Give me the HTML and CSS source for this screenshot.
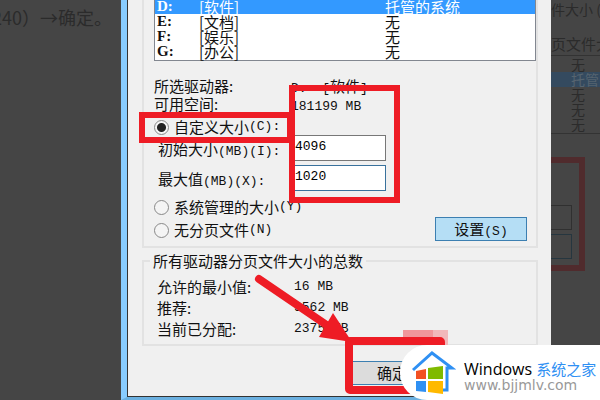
FILE: index.html
```
<!DOCTYPE html>
<html lang="zh-CN">
<head>
  <meta charset="UTF-8" />
  <meta name="viewport" content="width=device-width, initial-scale=1" />
  <title>虚拟内存</title>
  <link rel="stylesheet" href="styles.css">
</head>
<body>

  <div class="page">
    <div class="backdrop left"><p>240）→确定。</p></div>

    <form class="dialog">
      <div class="group drives">
        <table class="list">
          <tr class="selected"><td>D:</td><td>[软件]</td><td>托管的系统</td></tr>
          <tr><td>E:</td><td>[文档]</td><td>无</td></tr>
          <tr><td>F:</td><td>[娱乐]</td><td>无</td></tr>
          <tr><td>G:</td><td>[办公]</td><td>无</td></tr>
        </table>

        <div class="info">
          <span>所选驱动器:</span><span><b>D: &nbsp;[</b>软件<b>]</b></span>
          <span>可用空间:</span><span><b>181199 MB</b></span>
        </div>

        <label class="radio"><input type="radio" name="size" checked>自定义大小<b>(C):</b></label>
        <div class="field">
          <label for="initial">初始大小<b>(MB)(I):</b></label>
          <input type="text" id="initial" value="4096">
        </div>
        <div class="field">
          <label for="max">最大值<b>(MB)(X):</b></label>
          <input type="text" id="max" class="focused" value="1020">
        </div>
        <div class="choices">
          <div>
            <label class="radio"><input type="radio" name="size">系统管理的大小<b>(Y)</b></label>
            <label class="radio"><input type="radio" name="size">无分页文件<b>(N)</b></label>
          </div>
          <button type="button" class="set">设置<b>(S)</b></button>
        </div>
      </div>

      <fieldset class="group totals">
        <legend>所有驱动器分页文件大小的总数</legend>
        <div class="sums">
          <span>允许的最小值:</span><b>16 MB</b>
          <span>推荐:</span><b>3562 MB</b>
          <span>当前已分配:</span><b>2375 MB</b>
        </div>
      </fieldset>

      <div class="actions"><button type="button" class="ok">确定</button></div>
    </form>

    <div class="backdrop right">
      <p class="head">件大小 (</p>
      <p class="sub">页文件大小</p>
      <ul>
        <li>无</li>
        <li class="picked">托管的</li>
        <li>无</li>
        <li>无</li>
        <li>无</li>
      </ul>
      <div class="ghost"><i></i><i class="blue"></i></div>
    </div>

    <svg class="marks" width="600" height="400" viewBox="0 0 600 400">
      <path class="pink" d="M403 330h30v15h-30z"/>
      <path class="pale" d="M433 330h15v15h-15z"/>
      <rect x="142" y="115" width="148" height="25"/>
      <rect x="292" y="88" width="105" height="112"/>
      <rect class="thick" x="349" y="341" width="92" height="49" rx="1"/>
      <path class="thick" d="M259 279L328 326"/>
      <path class="tip" d="M333 313L352 342L319 337z"/>
    </svg>

    <div class="brand">
      <svg width="46" height="46" viewBox="0 0 46 46">
        <path d="M3 20L22 3L42 18H37V40H31" fill="none" stroke="#2f90f3" stroke-width="3"/>
        <path d="M6 21l10-2v10H6z" fill="#f25022"/>
        <path d="M18 18l15-2v13H18z" fill="#7fba00"/>
        <path d="M6 31h10v11l-10-1z" fill="#2f90f3"/>
        <path d="M18 31h15v13l-15-2z" fill="#ffb900"/>
      </svg>
      <div class="label">
        <div class="name">Windows <span>系统之家</span></div>
        <div class="site">www.bjjmlv.com</div>
      </div>
    </div>
  </div>

</body>
</html>
```

FILE: styles.css
```
body {
  margin: 0;
  font-family: "Noto Sans CJK SC", sans-serif;
  font-size: 15px;
  line-height: 18px;
  color: #111;
}
.page {
  position: relative;
  display: grid;
  grid-template-columns: 121px 1fr 49px;
  min-height: 100vh;
  overflow: hidden;
  background: #454545;
}
p, ul {
  margin: 0;
  padding: 0;
  list-style: none;
}
b {
  font-family: "Liberation Mono", monospace;
  font-size: 13px;
  line-height: 14px;
  font-weight: normal;
}
.backdrop {
  color: #2b2b2b;
  white-space: nowrap;
  overflow: hidden;
}
.left p {
  display: flex;
  justify-content: flex-end;
  padding: 8px 9px 0 0;
  font-size: 18px;
}
.dialog {
  box-sizing: border-box;
  min-width: 0;
  padding: 0 13px 8px 15px;
  background: #f0f0f0;
  border-left: 6px solid #88ccff;
  border-bottom: 3px solid #6bb0e0;
  box-shadow: inset 1px -1px #333;
}
.group {
  box-sizing: border-box;
  margin: 0;
  border: 2px solid #e2e2e2;
}
.drives {
  height: 249px;
  border-top: none;
  padding-left: 10px;
}
.list {
  width: 100%;
  margin-top: -1px;
  padding-bottom: 1px;
  border: 1px solid #828790;
  border-top: none;
  border-collapse: separate;
  border-spacing: 0;
  background: #fff;
  line-height: 15px;
}
.list td {
  padding: 0 0 0 2px;
  height: 15px;
}
.list td:first-child {
  width: 40px;
  font-family: "Liberation Serif", serif;
  font-weight: bold;
}
.list td:nth-child(2) {
  width: 184px;
}
.list .selected {
  background: #3399ff;
  color: #fff;
}
.info, .sums {
  display: grid;
  grid-template-columns: 137px 1fr;
}
.info {
  grid-auto-rows: 18px;
  padding: 16px 0 6px;
}
.radio {
  display: flex;
  align-items: center;
  height: 16px;
}
.radio + .radio {
  margin-top: 7px;
}
.radio input {
  appearance: none;
  box-sizing: border-box;
  width: 15px;
  height: 15px;
  margin: 0 5px 0 0;
  border: 1px solid #888;
  border-radius: 50%;
  background: #f4f4f4;
}
.radio input:checked {
  background: radial-gradient(#222 0 4px, #f4f4f4 5px);
}
.field {
  display: flex;
  align-items: flex-start;
  height: 30px;
  padding-left: 4px;
}
.field label {
  width: 132px;
  padding-top: 5px;
  line-height: 18px;
}
.field input {
  box-sizing: border-box;
  width: 96px;
  height: 26px;
  padding: 0 4px 3px;
  border: 1px solid #777;
  background: #fff;
  font: 13px "Liberation Mono", monospace;
}
.field .focused {
  border-color: #39719c;
}
.choices {
  display: flex;
  justify-content: space-between;
  align-items: flex-start;
  padding-top: 4px;
}
.set, .ok {
  width: 92px;
  height: 24px;
  padding: 0;
  font: inherit;
  color: #111;
}
.set {
  margin: 18px 9px 0 0;
  border: 1px solid #3c7fb1;
  background: #b5def5;
}
.totals {
  margin-top: 4px;
  padding: 8px 0 6px 13px;
}
.totals legend {
  margin-left: -7px;
  padding: 0 3px;
}
.sums {
  row-gap: 3px;
}
.sums b {
  padding-top: 2px;
}
.actions {
  display: flex;
  padding: 15px 0 0 204px;
}
.ok {
  border: 1px solid #3c7fb1;
  background: #dcdcdc;
}
.right .head {
  font-size: 14px;
}
.right .sub {
  margin-top: 17px;
  padding-bottom: 2px;
  border-bottom: 1px solid #333;
}
.right ul {
  margin-top: 1px;
  padding-bottom: 1px;
  border-bottom: 1px solid #333;
  line-height: 15px;
  font-size: 14px;
}
.right li {
  padding-left: 20px;
}
.right .picked {
  background: #344a5f;
  color: #566470;
}
.ghost {
  box-sizing: border-box;
  width: 34px;
  height: 114px;
  margin-top: 23px;
  padding-top: 42px;
  border: 6px solid #502b2d;
  border-left: none;
}
.ghost i {
  display: block;
  width: 20px;
  height: 23px;
  margin-bottom: 4px;
  border: 1px solid #303030;
  border-left: none;
}
.ghost .blue {
  border-color: #26363f;
}
.marks {
  position: absolute;
  left: 0;
  top: 0;
}
.marks rect, .marks .thick {
  fill: none;
  stroke: #ee1c25;
  stroke-width: 6;
  stroke-linecap: round;
}
.marks .thick {
  stroke-width: 8;
}
.marks .tip {
  fill: #ee1c25;
}
.marks .pink {
  fill: #f0979b;
}
.marks .pale {
  fill: #f1b8ba;
}
.brand {
  position: absolute;
  right: 0;
  bottom: 0;
  display: flex;
  align-items: center;
  gap: 8px;
  box-sizing: border-box;
  width: 200px;
  height: 55px;
  padding-left: 10px;
  border-radius: 27px 0 0 27px;
  background: #fff;
}
.label {
  padding-top: 8px;
}
.name {
  font-family: "Open Sans", "Noto Sans CJK SC", sans-serif;
  font-size: 16px;
  color: #000;
  white-space: nowrap;
}
.name span {
  font-size: 15px;
  color: #2f90f3;
}
.site {
  font: 14px/15px "DejaVu Sans", sans-serif;
  color: #999;
}
```
